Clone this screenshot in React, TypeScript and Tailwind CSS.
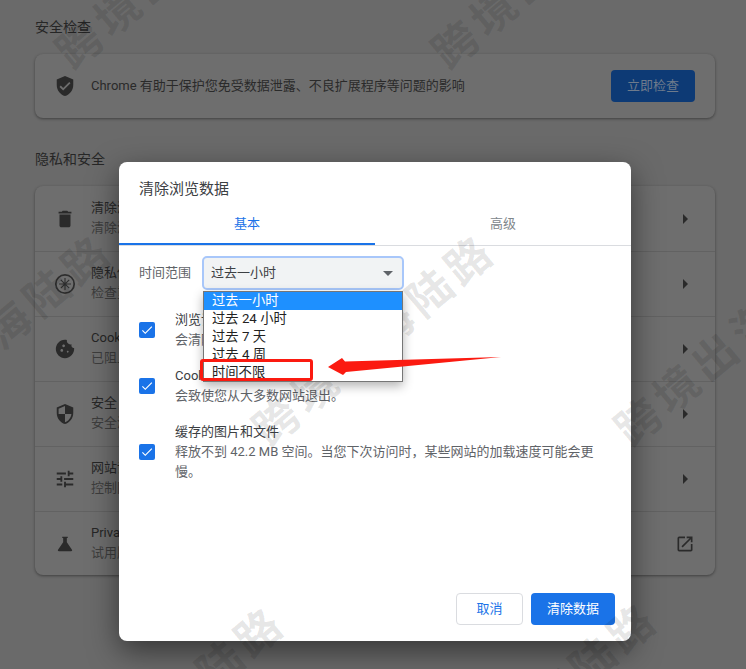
import React from 'react';
import { MdCheck, MdCookie, MdDelete, MdOpenInNew, MdSecurity, MdTune, MdVerifiedUser } from 'react-icons/md';

const FONT = "font-['Roboto','Noto_Sans_CJK_SC',sans-serif]";

const PrivacyGuideIcon = () => (
  <svg width="22" height="22" viewBox="0 0 22 22" fill="none" stroke="#2e2e2e">
    <circle cx="11" cy="11" r="9.2" strokeWidth="1.7" />
    <path strokeWidth="1.1" d="M11 5v12M5 11h12M6.8 6.8l8.4 8.4M15.2 6.8l-8.4 8.4" />
  </svg>
);

const FlaskIcon = () => (
  <svg width="24" height="24" viewBox="0 0 24 24" fill="currentColor">
    <path d="M9 4h6v1.4h-1V10l5.6 8.4c.5.9 0 1.6-1 1.6H5.4c-1 0-1.5-.7-1-1.6L10 10V5.4H9z" />
  </svg>
);

const ROWS = [
  { icon: <MdDelete size={22} />, title: '清除浏览数据', sub: '清除浏览记录、Cookie、缓存及其他数据' },
  { icon: <PrivacyGuideIcon />, title: '隐私保护指南', sub: '检查重要的隐私和安全控件' },
  { icon: <MdCookie size={22} />, title: 'Cookie 及其他网站数据', sub: '已阻止无痕模式下的第三方 Cookie' },
  { icon: <MdSecurity size={22} />, title: '安全', sub: '安全浏览（保护您免受危险网站的侵害）和其他安全设置' },
  { icon: <MdTune size={22} />, title: '网站设置', sub: '控制网站可以使用和显示的信息' },
  { icon: <FlaskIcon />, title: 'Privacy Sandbox', sub: '试用版功能已开启', external: true },
];

const WATERMARKS = [
  'left-[178px] top-[-37px]',
  'left-[554px] top-[-37px]',
  'left-[-8px] top-[340px]',
  'left-[375px] top-[340px]',
  'left-[737px] top-[340px]',
  'left-[165px] top-[712px]',
  'left-[538px] top-[708px]',
];

const OPTIONS = ['过去一小时', '过去 24 小时', '过去 7 天', '过去 4 周', '时间不限'];

const Checkbox = () => (
  <span className="flex h-4 w-4 shrink-0 items-center justify-center rounded-[2px] bg-[#1a73e8] text-white">
    <MdCheck size={14} />
  </span>
);

const ClearOption = ({ title, desc }: { title: string; desc: React.ReactNode }) => (
  <div className="flex items-center gap-5">
    <Checkbox />
    <div className="text-[13px] leading-5">
      <p className="text-[#3c4043]">{title}</p>
      <p className="text-[#5f6368]">{desc}</p>
    </div>
  </div>
);

const App: React.FC = () => {
  return (
    <div className={`relative h-[669px] w-[746px] overflow-hidden bg-[#6a6a6a] ${FONT}`}>
      {/* settings page behind the dialog */}
      <div className="pl-[35px] pr-[31px] pt-[18px]">
        <h2 className="text-sm leading-[18px] text-[#262626]">安全检查</h2>
        <div className="mt-[18px] flex h-16 items-center rounded-lg bg-[#6e6e6e] pl-[19px] pr-5 shadow-[0_1px_3px_rgba(0,0,0,0.4)]">
          <span className="flex w-[22px] justify-center text-[#2a2a2a]"><MdVerifiedUser size={22} /></span>
          <p className="ml-[15px] flex-1 text-[13px] text-[#2a2a2a]">Chrome 有助于保护您免受数据泄露、不良扩展程序等问题的影响</p>
          <button className="h-8 w-[84px] rounded bg-[#0d3a75] text-[13px] text-[#6e7b8c]">立即检查</button>
        </div>

        <h2 className="mt-8 text-sm leading-[18px] text-[#262626]">隐私和安全</h2>
        <div className="mt-[18px] h-[389px] rounded-lg bg-[#6e6e6e] shadow-[0_1px_3px_rgba(0,0,0,0.4)]">
          {ROWS.map((row, i) => (
            <div key={row.title} className={`flex h-[65px] items-center pl-[19px] pr-5 ${i > 0 ? 'border-t border-[#626262]' : ''}`}>
              <span className="flex w-[22px] justify-center text-[#2a2a2a]">{row.icon}</span>
              <div className="ml-[15px] flex-1 pb-0.5 text-[13px] leading-5">
                <p className="text-[#262626]">{row.title}</p>
                <p className="text-[#3d3d3d]">{row.sub}</p>
              </div>
              <span className="flex w-5 justify-center text-[#2a2a2a]">
                {row.external ? (
                  <MdOpenInNew size={20} />
                ) : (
                  <span className="h-0 w-0 border-y-[5px] border-l-[5px] border-y-transparent border-l-[#2a2a2a]" />
                )}
              </span>
            </div>
          ))}
        </div>
      </div>

      {/* clear browsing data dialog */}
      <div className="absolute left-[119px] top-[162px] flex h-[479px] w-[512px] flex-col rounded-lg bg-white shadow-[0_10px_30px_rgba(0,0,0,0.5)]">
        <h3 className="px-5 pt-[18px] text-[15px] leading-[18px] text-[#3c4043]">清除浏览数据</h3>
        <div className="mt-3 flex h-[36px] border-b border-[#dadce0] text-[13px]">
          <div className="flex h-[35px] w-[256px] justify-center border-b-[2px] border-[#1a73e8] pt-1 text-[#1a73e8]">基本</div>
          <div className="flex w-[256px] justify-center pt-1 text-[#80868b]">高级</div>
        </div>

        <div className="flex items-center px-5 pt-[10px]">
          <span className="w-[63px] text-[13px] text-[#5f6368]">时间范围</span>
          <div className="flex h-[34px] w-[202px] items-center justify-between rounded-[5px] border-2 border-[#a8c7fa] bg-[#f1f3f4] pl-[7px] pr-[9px] text-[13px] text-[#3c4043]">
            过去一小时
            <span className="h-0 w-0 border-x-[5px] border-t-[5px] border-x-transparent border-t-[#5f6368]" />
          </div>
        </div>

        <div className="flex flex-col gap-4 px-5 pt-5">
          <ClearOption title="浏览记录" desc="会清除所有已登录设备上的历史记录" />
          <ClearOption title="Cookie 及其他网站数据" desc="会致使您从大多数网站退出。" />
          <ClearOption
            title="缓存的图片和文件"
            desc={<>释放不到 42.2 MB 空间。当您下次访问时，某些网站的加载速度可能会更<br />慢。</>}
          />
        </div>

        <div className="mt-auto flex justify-end gap-2 pb-4 pr-4">
          <button className="h-8 w-[67px] rounded border border-[#dadce0] bg-white text-[13px] text-[#1a73e8]">取消</button>
          <button className="h-8 w-[84px] rounded bg-[#1a73e8] text-[13px] text-white">清除数据</button>
        </div>
      </div>

      {/* watermark */}
      {WATERMARKS.map((pos) => (
        <span
          key={pos}
          className={`pointer-events-none absolute -translate-x-1/2 -translate-y-1/2 -rotate-[40deg] whitespace-nowrap text-[44px] font-bold leading-none tracking-[6px] text-black/10 ${pos}`}
        >
          跨境出海陆路
        </span>
      ))}

      {/* open select list */}
      <ul className="absolute left-[203px] top-[291px] h-[91px] w-[200px] border border-[#767676] bg-white text-[13.3px] leading-[18px] text-[#222] shadow-[0_4px_10px_rgba(0,0,0,0.3)]">
        {OPTIONS.map((o, i) => (
          <li key={o} className={`pl-2 ${i === 0 ? 'bg-[#1e90ff] text-white' : ''}`}>{o}</li>
        ))}
      </ul>

      {/* annotation */}
      <div className="absolute left-[200px] top-[359px] h-[22px] w-[113px] rounded-[3px] border-[3px] border-[#fb1a10]" />
      <svg className="absolute left-[325px] top-[350px]" width="180" height="30" viewBox="0 0 180 30">
        <polygon points="3,17 17,8 20,11.5 176,7 21,22 18,25" fill="#fb1a10" />
      </svg>
    </div>
  );
};

export default App;
